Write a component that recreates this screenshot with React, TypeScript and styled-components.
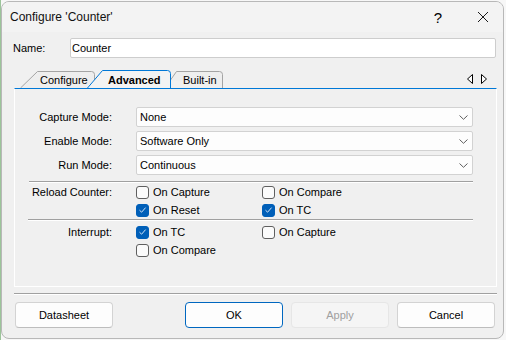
import React from 'react'
import styled, { createGlobalStyle } from 'styled-components'

const GlobalStyle = createGlobalStyle`
  * {
    box-sizing: border-box;
  }
  html,
  body {
    margin: 0;
    padding: 0;
  }
  body {
    height: 340px;
    overflow: hidden;
    background: #f7f7f7;
    border-left: 1px solid #9cc49a;
    font-family: 'Liberation Sans', Arial, sans-serif;
    font-size: 11px;
    color: #000;
  }
`

const Window = styled.div`
  margin-top: 1px;
  width: 503px;
  height: 338px;
  display: flex;
  flex-direction: column;
  background: #f0f0f0;
  border: 1px solid #b8b8b8;
  border-radius: 8px;
  overflow: hidden;
`

const TitleBar = styled.div`
  height: 30px;
  flex: none;
  display: flex;
  align-items: center;
  padding-left: 8px;
  background: #f3f3f3;
`

const Title = styled.span`
  flex: 1;
  font-size: 12px;
  color: #111;
`

const HelpButton = styled.span`
  width: 10px;
  margin-right: 34px;
  font-size: 15px;
  line-height: 1;
  text-align: center;
`

const CloseButton = styled.span`
  display: flex;
  width: 12px;
  margin-right: 14px;
`

const Body = styled.div`
  flex: 1;
  display: flex;
  flex-direction: column;
  padding: 6px 6px 10px 12px;
`

const NameRow = styled.div`
  display: flex;
  align-items: center;
  height: 20px;
`

const NameLabel = styled.span`
  width: 57px;
  margin-left: -1px;
`

const TextInput = styled.div`
  flex: 1;
  height: 20px;
  display: flex;
  align-items: center;
  padding-left: 1px;
  margin-right: 1px;
  background: #fff;
  border: 1px solid #cdcdcd;
  border-radius: 2px;
`

const TabStrip = styled.div`
  margin-top: 12px;
  height: 18px;
  display: flex;
  align-items: stretch;
  position: relative;
  padding-left: 6px;
`

const Tab = styled.div<{ $w: number; $pad: number; $overlap: number; $active?: boolean }>`
  position: relative;
  width: ${(p) => p.$w}px;
  margin-left: ${(p) => -p.$overlap}px;
  padding-left: ${(p) => p.$pad}px;
  display: flex;
  align-items: center;
  z-index: ${(p) => (p.$active ? 2 : 1)};
  font-weight: ${(p) => (p.$active ? 700 : 400)};

  svg {
    position: absolute;
    inset: 0;
  }
  span {
    position: relative;
    padding-top: 1px;
  }
`

const TabArrows = styled.div`
  margin-left: auto;
  margin-right: 10px;
  display: flex;
  align-items: center;
  gap: 8px;
`

const Panel = styled.div`
  height: 199px;
  border: 1px solid #fff;
  border-top-color: #0078d7;
  padding: 18px 23px 0 0;
`

const FormGrid = styled.div`
  display: grid;
  grid-template-columns: 97px 1fr;
  column-gap: 24px;
  row-gap: 4px;
  align-items: center;
`

const FieldLabel = styled.span<{ $top?: boolean }>`
  text-align: right;
  align-self: ${(p) => (p.$top ? 'start' : 'center')};
  line-height: 18px;
`

const Select = styled.div`
  height: 20px;
  display: flex;
  align-items: center;
  justify-content: space-between;
  padding: 0 4px 0 3px;
  background: #fdfdfd;
  border: 1px solid #d2d2d2;
  border-radius: 2px;
`

const Rule = styled.div<{ $inset: number; $mt?: number }>`
  margin-left: ${(p) => p.$inset}px;
  margin-top: ${(p) => p.$mt ?? 0}px;
  border-top: 1px solid #a0a0a0;
  border-bottom: 1px solid #fff;
`

const Group = styled.div<{ $mt: number }>`
  display: grid;
  grid-template-columns: 97px 1fr;
  column-gap: 24px;
  margin-top: ${(p) => p.$mt}px;
`

const CheckGrid = styled.div`
  display: grid;
  grid-template-columns: 126px 1fr;
  grid-auto-rows: 18px;
`

const CheckItem = styled.label`
  display: flex;
  align-items: center;
  gap: 4px;
`

const Box = styled.span<{ $on?: boolean }>`
  width: 13px;
  height: 13px;
  display: flex;
  align-items: center;
  justify-content: center;
  border-radius: 3px;
  border: 1px solid ${(p) => (p.$on ? '#005fb8' : '#5f5f5f')};
  background: ${(p) => (p.$on ? '#005fb8' : '#fbfbfb')};
`

const Footer = styled.div`
  margin-top: 6px;
`

const ButtonRow = styled.div`
  margin-top: 7px;
  display: flex;
  justify-content: space-between;
  padding: 0 2px 0 1px;
`

const ButtonGroup = styled.div`
  display: flex;
  gap: 8px;
`

const Button = styled.button<{ $primary?: boolean }>`
  width: 98px;
  height: 26px;
  font-family: inherit;
  font-size: 11px;
  color: ${(p) => (p.disabled ? '#a0a0a0' : '#000')};
  background: ${(p) => (p.disabled ? '#f5f5f5' : '#fdfdfd')};
  border: 1px solid
    ${(p) => (p.$primary ? '#0067c0' : p.disabled ? '#e6e6e6' : '#d3d3d3')};
  border-bottom-color: ${(p) =>
    p.$primary ? '#0067c0' : p.disabled ? '#e6e6e6' : '#bdbdbd'};
  border-radius: 4px;
  padding: 0;
`

const Chevron = () => (
  <svg width="9" height="5" viewBox="0 0 9 5">
    <path d="M0.5 0.5 L4.5 4.3 L8.5 0.5" fill="none" stroke="#5f5f5f" strokeWidth="1" />
  </svg>
)

const Check: React.FC<{ label: string; on?: boolean }> = ({ label, on }) => (
  <CheckItem>
    <Box $on={on}>
      {on && (
        <svg width="9" height="8" viewBox="0 0 9 8">
          <path d="M1.5 4.2 L3.6 6.2 L7.6 1.6" fill="none" stroke="#cfe3f7" strokeWidth="1" />
        </svg>
      )}
    </Box>
    {label}
  </CheckItem>
)

const tabs = [
  { label: 'Configure', w: 75, pad: 20, overlap: 0, path: 'M0.5 18 L17.5 1.5 H71.5 Q74.5 1.5 74.5 4.5 V18' },
  { label: 'Advanced', w: 84, pad: 21, overlap: 8, path: 'M0.5 18 L15.5 0.5 H80.5 Q83.5 0.5 83.5 3.5 V18', active: true },
  { label: 'Built-in', w: 53, pad: 13, overlap: 1, path: 'M0.5 10 L6.5 1.5 H49.5 Q52.5 1.5 52.5 4.5 V18' },
]

const App: React.FC = () => (
  <>
    <GlobalStyle />
    <Window>
      <TitleBar>
        <Title>Configure 'Counter'</Title>
        <HelpButton>?</HelpButton>
        <CloseButton>
          <svg width="12" height="12" viewBox="0 0 12 12">
            <path d="M1 1 L11 11 M11 1 L1 11" stroke="#1a1a1a" strokeWidth="1" />
          </svg>
        </CloseButton>
      </TitleBar>
      <Body>
        <NameRow>
          <NameLabel>Name:</NameLabel>
          <TextInput>Counter</TextInput>
        </NameRow>

        <TabStrip>
          {tabs.map((t) => (
            <Tab key={t.label} $w={t.w} $pad={t.pad} $overlap={t.overlap} $active={t.active}>
              <svg width={t.w} height="18" viewBox={`0 0 ${t.w} 18`}>
                <path
                  d={t.path}
                  fill={t.active ? '#f3f3f3' : '#eeeeee'}
                  stroke={t.active ? '#0078d7' : '#a4a4a4'}
                  strokeWidth="1"
                />
              </svg>
              <span>{t.label}</span>
            </Tab>
          ))}
          <TabArrows>
            <svg width="6" height="10" viewBox="0 0 6 10">
              <path d="M5.5 0.5 V9.5 L0.5 5 Z" fill="#fff" stroke="#000" strokeWidth="1" />
            </svg>
            <svg width="6" height="10" viewBox="0 0 6 10">
              <path d="M0.5 0.5 V9.5 L5.5 5 Z" fill="#fff" stroke="#000" strokeWidth="1" />
            </svg>
          </TabArrows>
        </TabStrip>

        <Panel>
          <FormGrid>
            <FieldLabel>Capture Mode:</FieldLabel>
            <Select>
              None
              <Chevron />
            </Select>
            <FieldLabel>Enable Mode:</FieldLabel>
            <Select>
              Software Only
              <Chevron />
            </Select>
            <FieldLabel>Run Mode:</FieldLabel>
            <Select>
              Continuous
              <Chevron />
            </Select>
          </FormGrid>

          <Rule $inset={14} $mt={6} />
          <Group $mt={0}>
            <FieldLabel $top>Reload Counter:</FieldLabel>
            <CheckGrid>
              <Check label="On Capture" />
              <Check label="On Compare" />
              <Check label="On Reset" on />
              <Check label="On TC" on />
            </CheckGrid>
          </Group>

          <Rule $inset={13} />
          <Group $mt={2}>
            <FieldLabel $top>Interrupt:</FieldLabel>
            <CheckGrid>
              <Check label="On TC" on />
              <Check label="On Capture" />
              <Check label="On Compare" />
            </CheckGrid>
          </Group>
        </Panel>

        <Footer>
          <Rule $inset={0} />
        </Footer>
        <ButtonRow>
          <Button>Datasheet</Button>
          <ButtonGroup>
            <Button $primary>OK</Button>
            <Button disabled>Apply</Button>
            <Button>Cancel</Button>
          </ButtonGroup>
        </ButtonRow>
      </Body>
    </Window>
  </>
)

export default App
